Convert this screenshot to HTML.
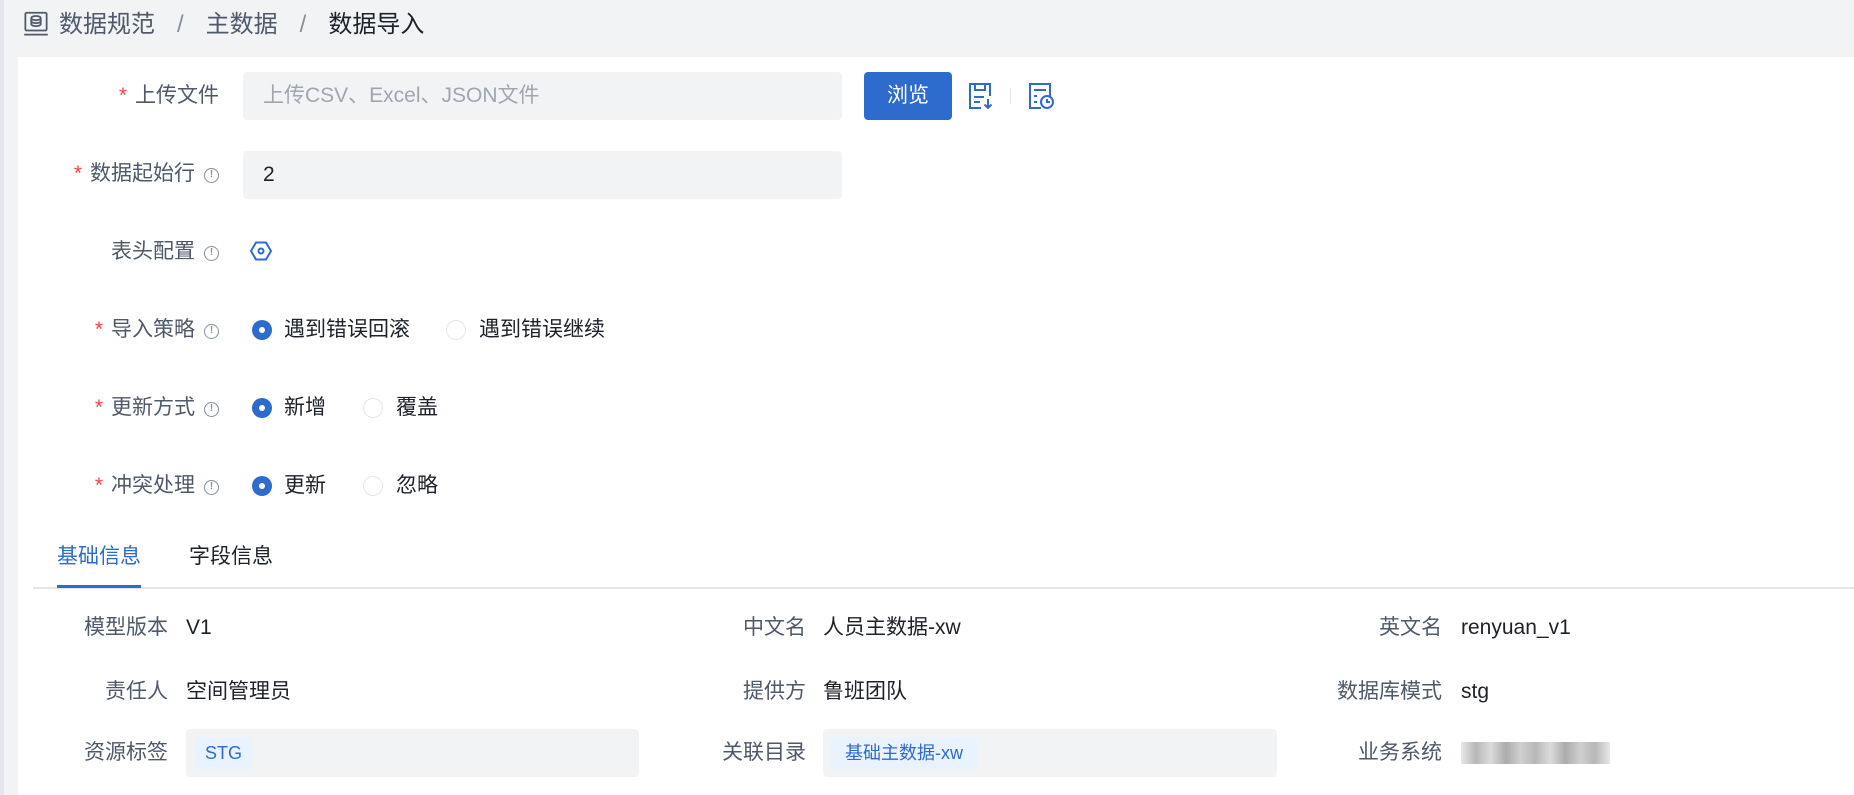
<!DOCTYPE html>
<html><head><meta charset="utf-8"><style>
*{margin:0;padding:0;box-sizing:border-box}
body{width:1854px;height:795px;background:#f2f3f5;font-family:"Liberation Sans","Noto Sans CJK SC",sans-serif;color:#1d2129;position:relative;overflow:hidden}
.a{position:absolute;white-space:nowrap}
.main{position:absolute;left:18px;top:57px;right:0;bottom:0;background:#fff}
.lbl{font-size:21px;color:#4e5969;text-align:right;width:200px;line-height:26px}
.req{color:#f53f3f;margin-right:8px}
.info{display:inline-block;width:15px;height:15px;border:1.5px solid #86909c;border-radius:50%;font-size:10px;line-height:12px;text-align:center;color:#86909c;vertical-align:3px;margin-left:9px;font-weight:bold}
.inp{background:#f2f3f5;border-radius:4px;height:48px;font-size:21px;line-height:48px;padding-left:20px}
.radio{width:20px;height:20px;border-radius:50%;border:1.5px solid #e5e6eb;background:#fff}
.radio.on{border:none;background:#2d6bcc}
.radio.on::after{content:"";position:absolute;left:7px;top:7px;width:6px;height:6px;border-radius:50%;background:#fff}
.rt{font-size:21px;line-height:26px;color:#1d2129}
.il{font-size:21px;color:#4e5969;text-align:right;line-height:26px}
.iv{font-size:21px;color:#1d2129;line-height:26px}
.tag{background:#e8f3ff;color:#2d6bcc;font-size:18px;line-height:32px;padding:0 10px;border-radius:3px}
</style></head><body>
<div class="a" style="left:0;top:0;width:4px;height:795px;background:#e5e6eb"></div>
<svg class="a" style="left:23px;top:11px" width="26" height="26" viewBox="0 0 22 22" fill="none" stroke="#4e5969" stroke-width="1.5"><rect x="2" y="1.5" width="18" height="15" rx="1"/><ellipse cx="11" cy="6" rx="4" ry="1.8"/><path d="M7 6v5c0 1 1.8 1.8 4 1.8s4-.8 4-1.8V6M7 8.5c0 1 1.8 1.8 4 1.8s4-.8 4-1.8"/><path d="M1 20h20"/></svg>
<div class="a" style="left:59px;top:10px;font-size:24px;line-height:30px;color:#4e5969">数据规范<span style="margin:0 22px;color:#86909c">/</span>主数据<span style="margin:0 22px;color:#86909c">/</span><span style="color:#1d2129">数据导入</span></div>
<div class="main"></div>

<div class="a lbl" style="left:19px;top:83px"><span class="req">*</span>上传文件</div>
<div class="a inp" style="left:243px;top:72px;width:599px;color:#a0a6b0">上传CSV、Excel、JSON文件</div>
<div class="a" style="left:864px;top:72px;width:88px;height:48px;background:#2d6bcc;border-radius:4px;color:#fff;font-size:21px;line-height:48px;text-align:center">浏览</div>
<svg class="a" style="left:967px;top:82px" width="28" height="28" viewBox="0 0 28 28" fill="none" stroke="#2d6bcc" stroke-width="2"><path d="M14 26H3V2h20v12"/><path d="M8 2v6h10V2M7 15h10M7 20h6M21 17v9M17.5 22.5l3.5 3.5 3.5-3.5"/></svg>
<div class="a" style="left:1010px;top:88px;width:1px;height:16px;background:#e5e6eb"></div>
<svg class="a" style="left:1027px;top:82px" width="28" height="28" viewBox="0 0 28 28" fill="none" stroke="#2d6bcc" stroke-width="2"><path d="M14 26H3V2h20v12"/><path d="M7 8h12M7 14h3M7 20h3"/><circle cx="20" cy="20" r="6"/><path d="M20 17v3h3"/></svg>

<div class="a lbl" style="left:19px;top:161px"><span class="req">*</span>数据起始行<span class="info">!</span></div>
<div class="a inp" style="left:243px;top:151px;width:599px;color:#1d2129">2</div>

<div class="a lbl" style="left:19px;top:239px">表头配置<span class="info">!</span></div>
<svg class="a" style="left:250px;top:240px" width="22" height="22" viewBox="0 0 22 22" fill="none" stroke="#2d6bcc" stroke-width="2"><path d="M6 2.5h10l5 8.5-5 8.5H6L1 11z"/><circle cx="11" cy="11" r="2.5"/></svg>

<div class="a lbl" style="left:19px;top:317px"><span class="req">*</span>导入策略<span class="info">!</span></div>
<div class="a radio on" style="left:252px;top:320px"></div><div class="a rt" style="left:284px;top:317px">遇到错误回滚</div>
<div class="a radio" style="left:446px;top:320px"></div><div class="a rt" style="left:479px;top:317px">遇到错误继续</div>

<div class="a lbl" style="left:19px;top:395px"><span class="req">*</span>更新方式<span class="info">!</span></div>
<div class="a radio on" style="left:252px;top:398px"></div><div class="a rt" style="left:284px;top:395px">新增</div>
<div class="a radio" style="left:363px;top:398px"></div><div class="a rt" style="left:396px;top:395px">覆盖</div>

<div class="a lbl" style="left:19px;top:473px"><span class="req">*</span>冲突处理<span class="info">!</span></div>
<div class="a radio on" style="left:252px;top:476px"></div><div class="a rt" style="left:284px;top:473px">更新</div>
<div class="a radio" style="left:363px;top:476px"></div><div class="a rt" style="left:396px;top:473px">忽略</div>

<div class="a" style="left:57px;top:544px;font-size:21px;line-height:26px;color:#2d6bcc">基础信息</div>
<div class="a" style="left:189px;top:544px;font-size:21px;line-height:26px;color:#1d2129">字段信息</div>
<div class="a" style="left:33px;top:587px;right:0;height:2px;background:#e5e6eb"></div>
<div class="a" style="left:57px;top:585px;width:84px;height:3px;background:#2d6bcc"></div>

<div class="a il" style="right:1686px;top:615px">模型版本</div><div class="a iv" style="left:186px;top:615px">V1</div>
<div class="a il" style="right:1048px;top:615px">中文名</div><div class="a iv" style="left:823px;top:615px">人员主数据-xw</div>
<div class="a il" style="right:412px;top:615px">英文名</div><div class="a iv" style="left:1461px;top:615px">renyuan_v1</div>

<div class="a il" style="right:1686px;top:679px">责任人</div><div class="a iv" style="left:186px;top:679px">空间管理员</div>
<div class="a il" style="right:1048px;top:679px">提供方</div><div class="a iv" style="left:823px;top:679px">鲁班团队</div>
<div class="a il" style="right:412px;top:679px">数据库模式</div><div class="a iv" style="left:1461px;top:679px">stg</div>

<div class="a il" style="right:1686px;top:740px">资源标签</div>
<div class="a" style="left:186px;top:729px;width:453px;height:48px;background:#f2f3f5;border-radius:4px"></div>
<div class="a tag" style="left:195px;top:737px">STG</div>
<div class="a il" style="right:1048px;top:740px">关联目录</div>
<div class="a" style="left:823px;top:729px;width:454px;height:48px;background:#f2f3f5;border-radius:4px"></div>
<div class="a tag" style="left:831px;top:737px;padding:0 14px">基础主数据-xw</div>
<div class="a il" style="right:412px;top:740px">业务系统</div>
<div class="a" style="left:1461px;top:742px;width:149px;height:22px;background:linear-gradient(90deg,#ddd,#999 10%,#ccc 20%,#888 30%,#bbb 40%,#999 50%,#ccc 60%,#888 70%,#bbb 80%,#999 90%,#ddd);opacity:.7"></div>
</body></html>
